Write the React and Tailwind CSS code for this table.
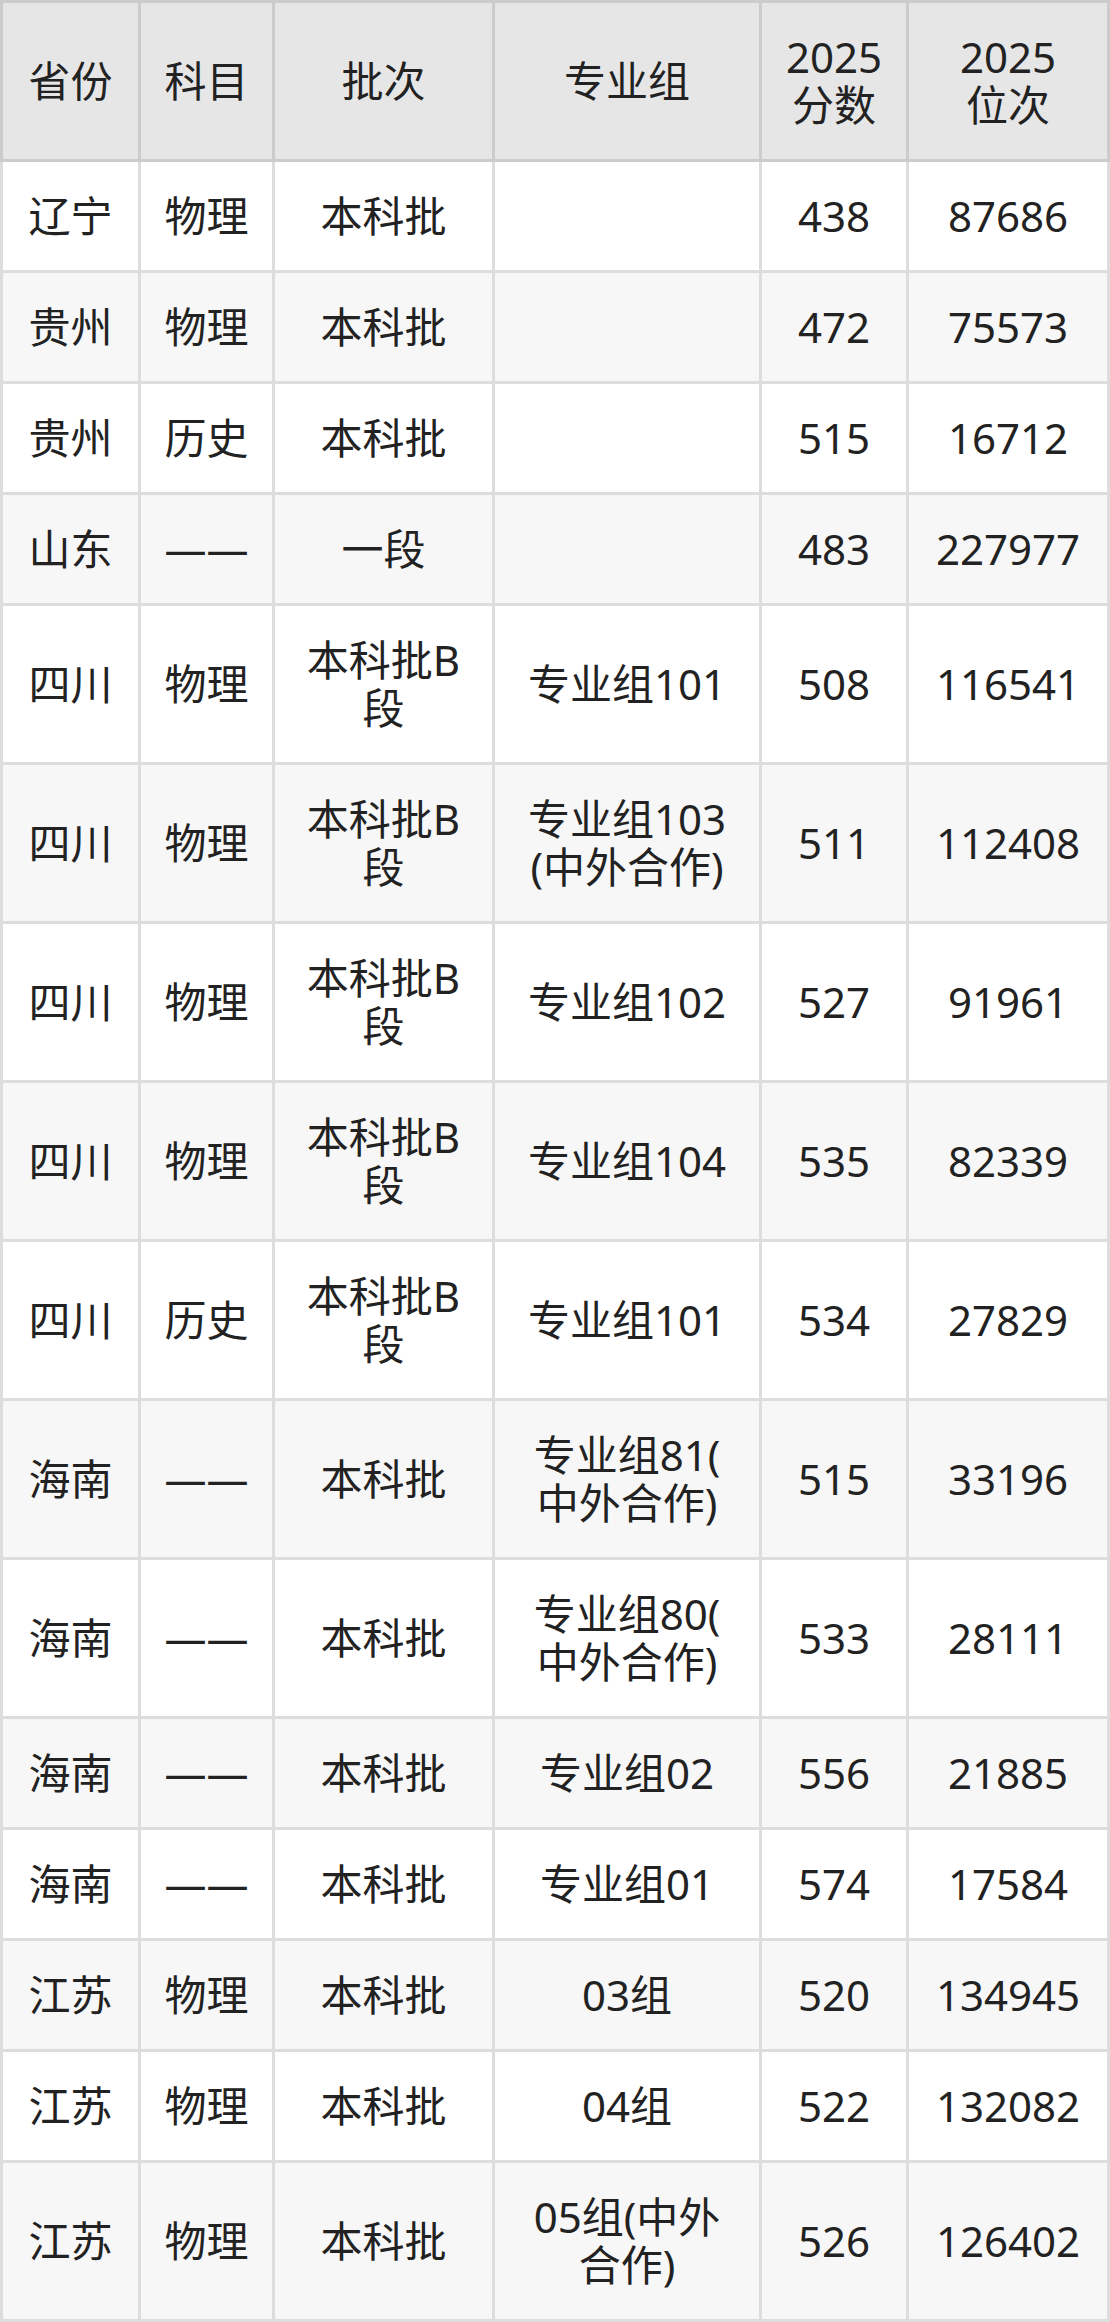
import React from "react";

const headers = [["省份"], ["科目"], ["批次"], ["专业组"], ["2025", "分数"], ["2025", "位次"]];

const rows = [
  ["辽宁", "物理", "本科批", "", "438", "87686"],
  ["贵州", "物理", "本科批", "", "472", "75573"],
  ["贵州", "历史", "本科批", "", "515", "16712"],
  ["山东", "——", "一段", "", "483", "227977"],
  ["四川", "物理", ["本科批B", "段"], "专业组101", "508", "116541"],
  ["四川", "物理", ["本科批B", "段"], ["专业组103", "(中外合作)"], "511", "112408"],
  ["四川", "物理", ["本科批B", "段"], "专业组102", "527", "91961"],
  ["四川", "物理", ["本科批B", "段"], "专业组104", "535", "82339"],
  ["四川", "历史", ["本科批B", "段"], "专业组101", "534", "27829"],
  ["海南", "——", "本科批", ["专业组81(", "中外合作)"], "515", "33196"],
  ["海南", "——", "本科批", ["专业组80(", "中外合作)"], "533", "28111"],
  ["海南", "——", "本科批", "专业组02", "556", "21885"],
  ["海南", "——", "本科批", "专业组01", "574", "17584"],
  ["江苏", "物理", "本科批", "03组", "520", "134945"],
  ["江苏", "物理", "本科批", "04组", "522", "132082"],
  ["江苏", "物理", "本科批", ["05组(中外", "合作)"], "526", "126402"],
];

const Cell = ({ value, first, head, odd }) => {
  const lines = Array.isArray(value) ? value : [value];
  return (
    <div
      className={
        "flex flex-col items-center justify-center text-center py-[30px] border-r-[3px] border-b-[3px] " +
        (first ? "border-l-[3px] " : "") +
        (head
          ? "bg-[#e6e6e6] border-[#cccccc] border-t-[3px]"
          : odd
          ? "bg-white border-[#dddddd]"
          : "bg-[#f7f7f7] border-[#dddddd]")
      }
    >
      {lines.map((l, i) => (
        <div key={i} className="whitespace-nowrap h-[48px]">
          {l}
        </div>
      ))}
    </div>
  );
};

export default function App() {
  return (
    <div
      className="w-[1110px] bg-white text-[#222222] text-[42px] leading-[48px]"
      style={{ fontFamily: '"Noto Sans", "Noto Sans CJK SC", sans-serif' }}
    >
      <div className="grid grid-cols-[141px_134px_220px_267px_147px_201px]">
        {headers.map((h, i) => (
          <Cell key={"h" + i} value={h} first={i === 0} head />
        ))}
        {rows.map((r, ri) =>
          r.map((c, ci) => (
            <Cell key={ri + "-" + ci} value={c} first={ci === 0} odd={ri % 2 === 0} />
          ))
        )}
      </div>
    </div>
  );
}
